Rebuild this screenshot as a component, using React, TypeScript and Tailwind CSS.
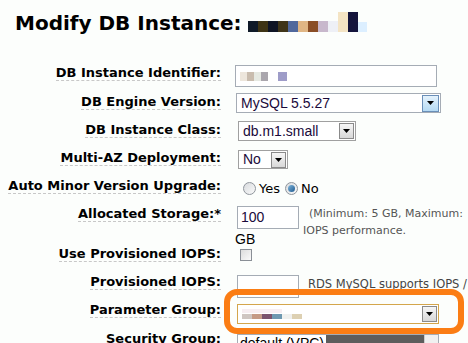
import { ReactNode } from 'react';

const label = "font-['DejaVu_Sans',sans-serif] font-bold text-[13px] text-black";

function Row({ name, h, children, top = 0 }: { name: string; h: string; children: ReactNode; top?: number }) {
  return (
    <div className={`flex ${h}`}>
      <div className="w-[221px] shrink-0 flex justify-end items-start" style={{ paddingTop: top }}>
        <span className={`${label} leading-[15px] border-b border-dashed border-[#c8c8c8]`}>{name}</span>
      </div>
      <div className="pl-[14px] flex-1 min-w-0">{children}</div>
    </div>
  );
}

function Arrow({ blue }: { blue?: boolean }) {
  return (
    <div
      className={
        blue
          ? 'w-[17px] h-[17px] shrink-0 border border-[#6a8fb8] bg-gradient-to-b from-[#e4f2fc] to-[#b5daf3] flex items-center justify-center'
          : 'w-[15px] h-[16px] shrink-0 border border-[#8a8a8a] bg-gradient-to-b from-[#f6f6f6] to-[#d8d8d8] flex items-center justify-center'
      }
    >
      <svg width="7" height="4" viewBox="0 0 7 4">
        <path d="M0 0h7L3.5 4z" fill="#000" />
      </svg>
    </div>
  );
}

function Radio({ on }: { on?: boolean }) {
  return (
    <span className="w-[13px] h-[13px] rounded-full border border-[#8f959c] bg-gradient-to-br from-[#d8dbde] to-[#fafafa] flex items-center justify-center">
      {on && <span className="w-[7px] h-[7px] rounded-full bg-gradient-to-br from-[#7fb6dc] to-[#1c5a8f]" />}
    </span>
  );
}

const ctl = "font-['Liberation_Sans',Arial,sans-serif] text-[14px] text-[#1a0a3a]";

export default function App() {
  return (
    <div className="w-[468px] h-[343px] overflow-hidden bg-[#fcfefc] relative">
      <div className="h-[58px] pl-[15px] pt-[11px] flex items-start">
        <h1 className="font-['DejaVu_Sans',sans-serif] font-bold text-[20px] leading-[24px] text-black">
          Modify DB Instance:
        </h1>
        <div className="ml-[6px] flex items-end h-[21px]">
          <span className="w-[10px] h-[11px] bg-[#0f1a28]" />
          <span className="w-[10px] h-[11px] bg-[#3e3414]" />
          <span className="w-[10px] h-[11px] bg-[#0e1424]" />
          <span className="w-[10px] h-[11px] bg-[#3f3518]" />
          <span className="w-[10px] h-[11px] bg-[#50689c]" />
          <span className="w-[10px] h-[11px] bg-[#e0b684]" />
          <span className="w-[10px] h-[11px] bg-[#8a4e26]" />
          <span className="w-[10px] h-[11px] bg-[#c8b8cc]" />
          <span className="w-[10px] h-[11px] bg-[#eef0f6]" />
          <span className="w-[10px] h-[20px] bg-[#f4e4c4]" />
          <span className="w-[10px] h-[20px] bg-[#14143c]" />
          <span className="w-[9px] h-[10px] bg-[#dcefff]" />
        </div>
      </div>

      <Row name="DB Instance Identifier:" h="h-[29px]" top={7}>
        <div className="mt-[7px] w-[202px] h-[22px] border border-[#a5acb5] bg-white flex items-center pl-[4px]">
          <span className="w-[7px] h-[9px] bg-[#ede6dc]" />
          <span className="w-[7px] h-[9px] bg-[#c9bcae]" />
          <span className="w-[7px] h-[9px] bg-[#e6e9e2]" />
          <span className="w-[7px] h-[9px] bg-[#aaa6ad]" />
          <span className="ml-[10px] w-[9px] h-[9px] bg-[#9e9cc8]" />
        </div>
      </Row>

      <Row name="DB Engine Version:" h="h-[28px]" top={7}>
        <div className={`mt-[6px] ml-[1px] w-[205px] h-[20px] border border-[#a5acb5] bg-white flex items-center justify-between pl-[4px] pr-[1px] ${ctl}`}>
          <span>MySQL 5.5.27</span>
          <Arrow blue />
        </div>
      </Row>

      <Row name="DB Instance Class:" h="h-[28px]" top={7}>
        <div className={`mt-[6px] ml-[3px] w-[118px] h-[20px] border border-[#a0a0a0] bg-white flex items-center justify-between pl-[4px] pr-[1px] ${ctl}`}>
          <span>db.m1.small</span>
          <Arrow />
        </div>
      </Row>

      <Row name="Multi-AZ Deployment:" h="h-[28px]" top={7}>
        <div className={`mt-[7px] ml-[3px] w-[50px] h-[19px] border border-[#a0a0a0] bg-white flex items-center justify-between pl-[4px] pr-[1px] ${ctl}`}>
          <span>No</span>
          <Arrow />
        </div>
      </Row>

      <Row name="Auto Minor Version Upgrade:" h="h-[28px]" top={7}>
        <div className="mt-[8px] ml-[8px] flex items-center font-['DejaVu_Sans',sans-serif] text-[13px] text-black">
          <Radio />
          <span className="ml-[3px]">Yes</span>
          <span className="ml-[5px]"><Radio on /></span>
          <span className="ml-[3px]">No</span>
        </div>
      </Row>

      <Row name="Allocated Storage:*" h="h-[40px]" top={7}>
        <div className="flex">
          <div className="mt-[7px] ml-[2px] flex flex-col shrink-0">
            <div className={`w-[62px] h-[23px] border border-[#a5acb5] bg-white flex items-center pl-[3px] ${ctl}`}>100</div>
            <span className={`mt-[2px] -ml-[2px] ${ctl} text-black leading-[16px]`}>GB</span>
          </div>
          <div className="ml-[4px] mt-[6px] font-['DejaVu_Sans',sans-serif] text-[11px] leading-[17px] text-[#555] whitespace-nowrap">
            <div className="pl-[6px]">(Minimum: 5 GB, Maximum:</div>
            <div>IOPS performance.</div>
          </div>
        </div>
      </Row>

      <Row name="Use Provisioned IOPS:" h="h-[28px]" top={7}>
        <div className="mt-[10px] ml-[5px] w-[12px] h-[12px] border border-[#8a8f96] bg-gradient-to-br from-[#dcdcdc] to-[#fafafa]" />
      </Row>

      <Row name="Provisioned IOPS:" h="h-[28px]" top={7}>
        <div className="flex">
          <div className="mt-[8px] ml-[2px] w-[62px] h-[23px] shrink-0 border border-[#a5acb5] bg-white" />
          <span className="ml-[9px] mt-[9px] font-['DejaVu_Sans',sans-serif] text-[11.5px] leading-[16px] text-[#444] whitespace-nowrap">
            RDS MySQL supports IOPS /
          </span>
        </div>
      </Row>

      <Row name="Parameter Group:" h="h-[29px]" top={7}>
        <div className="mt-[9px] ml-[2px] w-[202px] h-[20px] border border-[#d4a64c] bg-white flex items-center justify-between pl-[4px] pr-[1px]">
          <div className="flex flex-col gap-[1px]">
            <div className="flex"><span className="w-[40px] h-[4px] bg-[#f7eef2]" /></div>
            <div className="flex items-center">
              <span className="w-[10px] h-[5px] bg-[#cfc6c2]" />
              <span className="w-[10px] h-[5px] bg-[#c59a86]" />
              <span className="w-[10px] h-[5px] bg-[#7a526c]" />
              <span className="w-[10px] h-[5px] bg-[#6e98b0]" />
              <span className="w-[10px] h-[5px] bg-[#f0f0ee]" />
              <span className="w-[10px] h-[5px] bg-[#ddd0b2]" />
            </div>
          </div>
          <Arrow />
        </div>
      </Row>

      <Row name="Security Group:" h="h-[28px]" top={7}>
        <div className="mt-[10px] ml-[2px] w-[202px] h-[30px] border border-[#a5acb5] bg-white flex">
          <div className="flex-1 bg-[#5d5d5d] flex items-start">
            <span className={`bg-white px-[2px] leading-[16px] ${ctl} text-black`}>default (VPC)</span>
          </div>
          <div className="w-[14px] bg-[#f0f0f0] border-l border-[#ccc]" />
        </div>
      </Row>

      <div className="absolute left-[224px] top-[289px] w-[240px] h-[45px] rounded-[13px] border-[6px] border-[#fb7d14] pointer-events-none" />
    </div>
  );
}
